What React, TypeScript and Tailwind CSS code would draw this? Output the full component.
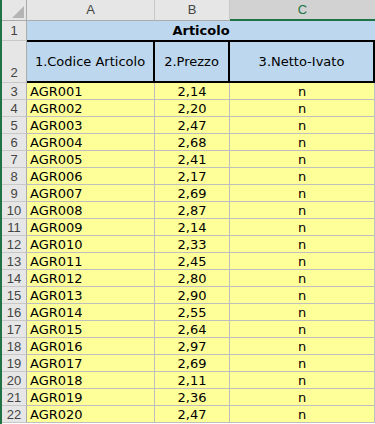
const rows: [string, string][] = [
  ["AGR001", "2,14"],
  ["AGR002", "2,20"],
  ["AGR003", "2,47"],
  ["AGR004", "2,68"],
  ["AGR005", "2,41"],
  ["AGR006", "2,17"],
  ["AGR007", "2,69"],
  ["AGR008", "2,87"],
  ["AGR009", "2,14"],
  ["AGR010", "2,33"],
  ["AGR011", "2,45"],
  ["AGR012", "2,80"],
  ["AGR013", "2,90"],
  ["AGR014", "2,55"],
  ["AGR015", "2,64"],
  ["AGR016", "2,97"],
  ["AGR017", "2,69"],
  ["AGR018", "2,11"],
  ["AGR019", "2,36"],
  ["AGR020", "2,47"],
];

const headFont = { fontFamily: '"Liberation Sans", Arial, sans-serif' };
const cellFont = { fontFamily: '"DejaVu Sans", Verdana, sans-serif' };

function RowNum({ n, className = "" }: { n: number; className?: string }) {
  return (
    <div
      className={`w-[25px] shrink-0 bg-[#e6e6e6] border-r border-b border-r-[#ababab] border-b-[#c8c8c8] text-[13px] text-[#444] flex justify-center ${className}`}
      style={headFont}
    >
      {n}
    </div>
  );
}

export default function App() {
  return (
    <div className="w-[375px] h-[424px] overflow-hidden bg-white flex">
      <div className="w-[2px] shrink-0 bg-[#217346]" />
      <div className="flex flex-col">
        {/* column letters */}
        <div className="flex h-[21px] text-[13px]" style={headFont}>
          <div className="w-[25px] shrink-0 bg-[#e6e6e6] border-r border-b border-[#ababab] flex items-end justify-end pr-[2px] pb-[2px]">
            <svg width="12" height="12" viewBox="0 0 12 12">
              <polygon points="12,0 12,12 0,12" fill="#b4b4b4" />
            </svg>
          </div>
          <div className="w-[128px] bg-[#e6e6e6] border-r border-b border-r-[#c8c8c8] border-b-[#ababab] flex items-center justify-center text-[#444]">
            A
          </div>
          <div className="w-[75px] bg-[#e6e6e6] border-r border-b border-r-[#c8c8c8] border-b-[#ababab] flex items-center justify-center text-[#444]">
            B
          </div>
          <div className="w-[145px] bg-[#d2d2d2] border-b-2 border-[#217346] flex items-center justify-center text-[#217346]">
            C
          </div>
        </div>

        {/* row 1 */}
        <div className="flex h-[20px]">
          <RowNum n={1} className="items-center" />
          <div
            className="w-[348px] bg-[#bdd7ee] border-b border-black flex items-center justify-center font-bold text-[13px] text-black"
            style={cellFont}
          >
            Articolo
          </div>
        </div>

        {/* row 2 */}
        <div className="flex h-[42px]">
          <RowNum n={2} className="items-end" />
          <div
            className="flex bg-[#bdd7ee] border-b-2 border-t border-black text-[13px] text-black"
            style={cellFont}
          >
            <div className="w-[128px] border-r-2 border-black flex items-center justify-center">
              1.Codice Articolo
            </div>
            <div className="w-[75px] border-r-2 border-black flex items-center justify-center">
              2.Prezzo
            </div>
            <div className="w-[145px] border-r-2 border-black flex items-center justify-center">
              3.Netto-Ivato
            </div>
          </div>
        </div>

        {/* data rows */}
        {rows.map(([code, price], i) => (
          <div key={code} className="flex h-[17px]">
            <RowNum n={i + 3} className="items-center leading-none" />
            <div className="flex bg-[#ffff99] text-[13px] text-black leading-none" style={cellFont}>
              <div className="w-[128px] border-r border-b border-[#bfbfbf] flex items-center pl-[3px]">
                {code}
              </div>
              <div className="w-[75px] border-r border-b border-[#bfbfbf] flex items-center justify-center">
                {price}
              </div>
              <div className="w-[145px] border-r border-b border-[#bfbfbf] flex items-center justify-center">
                n
              </div>
            </div>
          </div>
        ))}
      </div>
    </div>
  );
}
